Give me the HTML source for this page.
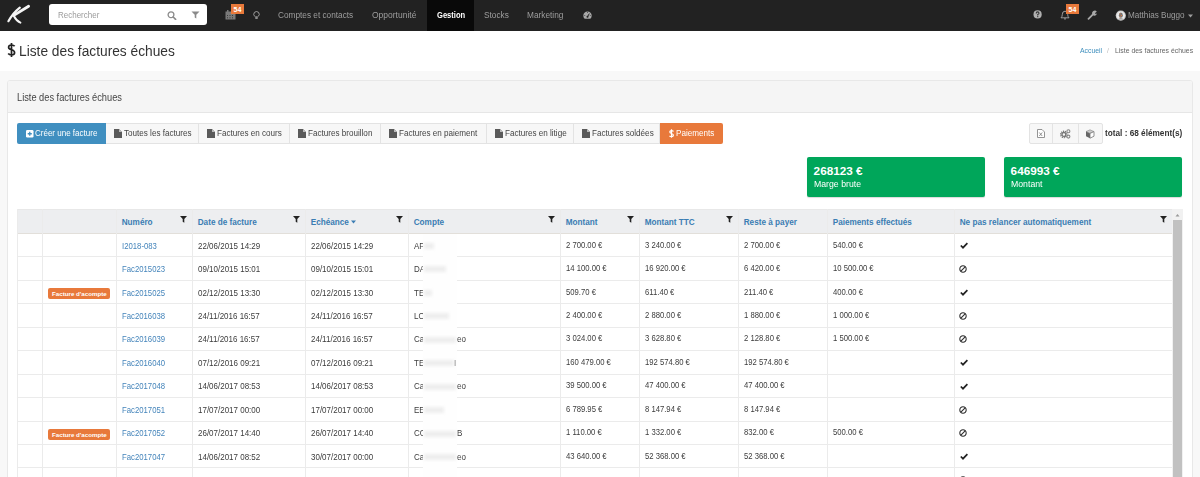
<!DOCTYPE html><html><head><meta charset="utf-8"><style>
*{box-sizing:border-box;margin:0;padding:0}
html,body{width:1200px;height:477px;overflow:hidden;background:#f8f8f8;font-family:"Liberation Sans",sans-serif;color:#333}
div,span{position:absolute;white-space:nowrap}
svg{position:absolute}
.hl{height:1px;background:#ebebeb}
.vl{width:1px;background:#ebebeb}
</style></head><body>
<div style="left:0;top:0;width:1200px;height:31px;background:#222"></div>
<svg style="left:0;top:0" width="40" height="30" viewBox="0 0 40 30"><path d="M8.4 21.2 Q13 13 19.8 7.6" stroke="#f4f4f4" stroke-width="2.2" fill="none" stroke-linecap="round"/><path d="M13.8 15.4 L28.6 6.2" stroke="#f4f4f4" stroke-width="2.8" fill="none" stroke-linecap="round"/><path d="M14 16.2 Q16.5 21 20.4 22.6" stroke="#f4f4f4" stroke-width="2" fill="none" stroke-linecap="round"/></svg>
<div style="left:49px;top:4px;width:158px;height:21px;background:#fff;border-radius:3px"></div>
<div style="left:57.50px;top:5px;height:20px;line-height:20px;font-size:8.60px;color:#9a9a9a;transform:scaleX(0.930);transform-origin:0 0;">Rechercher</div>
<svg style="left:167px;top:11px" width="10" height="9" viewBox="0 0 10 9"><circle cx="4" cy="3.8" r="2.9" stroke="#8a8a8a" stroke-width="1.3" fill="none"/><path d="M6.2 6 L8.6 8.4" stroke="#8a8a8a" stroke-width="1.6" stroke-linecap="round"/></svg>
<svg style="left:191px;top:11px" width="9" height="8" viewBox="0 0 9 8"><path d="M0.5 0.5 H8.5 L5.3 3.8 V7.5 L3.7 6.5 V3.8 Z" fill="#8a8a8a"/></svg>
<svg style="left:225px;top:10px" width="11" height="10" viewBox="0 0 11 10"><rect x="0.5" y="1.5" width="10" height="8" fill="#7a7a7a"/><rect x="2" y="0" width="1.5" height="2" fill="#7a7a7a"/><g fill="#3a3a3a"><rect x="2" y="5" width="1" height="1"/><rect x="4.5" y="5" width="1" height="1"/><rect x="7" y="5" width="1" height="1"/><rect x="2" y="7.3" width="1" height="1"/><rect x="4.5" y="7.3" width="1" height="1"/><rect x="7" y="7.3" width="1" height="1"/></g></svg>
<div style="left:231px;top:4px;width:13px;height:10px;background:#e8793b"></div>
<div style="left:233.50px;top:0px;height:20px;line-height:20px;font-size:7.00px;color:#fff;font-weight:bold;">54</div>
<svg style="left:253px;top:11px" width="7" height="8" viewBox="0 0 7 8"><path d="M3.5 0.5 A3 3 0 0 1 6.3 3.5 Q6 5 4.6 5.8 H2.4 Q1 5 0.7 3.5 A3 3 0 0 1 3.5 0.5Z" stroke="#aaa" stroke-width="0.9" fill="none"/><rect x="2.3" y="6.3" width="2.4" height="1.5" fill="#aaa"/></svg>
<div style="left:277.50px;top:5px;height:20px;line-height:20px;font-size:8.88px;color:#9d9d9d;transform:scaleX(0.930);transform-origin:0 0;">Comptes et contacts</div>
<div style="left:371.50px;top:5px;height:20px;line-height:20px;font-size:9.14px;color:#9d9d9d;transform:scaleX(0.930);transform-origin:0 0;">Opportunité</div>
<div style="left:427px;top:0;width:47px;height:31px;background:#090909"></div>
<div style="left:436.50px;top:6px;height:20px;line-height:20px;font-size:8.17px;color:#fff;font-weight:bold;transform:scaleX(0.930);transform-origin:0 0;">Gestion</div>
<div style="left:483.50px;top:5px;height:20px;line-height:20px;font-size:8.92px;color:#9d9d9d;transform:scaleX(0.930);transform-origin:0 0;">Stocks</div>
<div style="left:527.00px;top:5px;height:20px;line-height:20px;font-size:8.92px;color:#9d9d9d;transform:scaleX(0.930);transform-origin:0 0;">Marketing</div>
<svg style="left:583px;top:10.5px" width="9" height="9" viewBox="0 0 9 9"><path d="M1.67 7.8 A4.2 4.2 0 1 1 7.33 7.8 Z" fill="#a8a8a8"/><path d="M4.5 5.8 L6.3 2.6" stroke="#222" stroke-width="1"/><circle cx="4.5" cy="5.8" r="1" fill="#222"/><g fill="#222"><rect x="4.2" y="1" width="0.6" height="1"/><rect x="1.2" y="4.2" width="1" height="0.6"/><rect x="6.8" y="4.2" width="1" height="0.6"/></g></svg>
<svg style="left:1033px;top:10px" width="10" height="9" viewBox="0 0 10 9"><circle cx="4.6" cy="4.4" r="4.1" fill="#b0b0b0"/><path d="M3.2 3.4 Q3.2 1.9 4.6 1.9 Q6 1.9 6 3.2 Q6 4 4.7 4.6 V5.4" stroke="#333" stroke-width="1.1" fill="none"/><rect x="4.1" y="6.1" width="1.2" height="1.1" fill="#333"/></svg>
<svg style="left:1060px;top:10px" width="10" height="10" viewBox="0 0 10 10"><path d="M1 7.8 Q2.3 6.6 2.3 4.5 Q2.3 1.2 5 1.2 Q7.7 1.2 7.7 4.5 Q7.7 6.6 9 7.8 Z" stroke="#a8a8a8" stroke-width="0.9" fill="none"/><path d="M4 8.6 Q5 9.8 6 8.6" stroke="#a8a8a8" stroke-width="0.9" fill="none"/></svg>
<div style="left:1066px;top:4px;width:13px;height:10px;background:#e8793b"></div>
<div style="left:1068.50px;top:0px;height:20px;line-height:20px;font-size:7.00px;color:#fff;font-weight:bold;">54</div>
<svg style="left:1087px;top:10px" width="11" height="10" viewBox="0 0 11 10"><path d="M1.5 8.8 L6.2 4.2" stroke="#a8a8a8" stroke-width="1.8" stroke-linecap="round"/><path d="M5.5 4.5 A2.6 2.6 0 0 1 9.8 1.6 L8.2 3 L8.4 4 L9.5 4.2 L10 2.6 A2.6 2.6 0 0 1 6.5 5.5Z" fill="#a8a8a8"/></svg>
<svg style="left:1115px;top:10px" width="12" height="12" viewBox="0 0 12 12"><circle cx="5.8" cy="5.6" r="5.1" fill="#c9c9c9"/><circle cx="5.8" cy="5.6" r="4.2" fill="#eaeaea"/><ellipse cx="5.9" cy="5.2" rx="2" ry="2.6" fill="#777"/><path d="M2.5 9.5 Q5.8 6.5 9.1 9.5" fill="#999"/><g fill="#e8793b"><rect x="4.6" y="3.4" width="1" height="1"/><rect x="6" y="5" width="1" height="1"/><rect x="4.6" y="6.4" width="1" height="1"/></g></svg>
<div style="left:1128.00px;top:5px;height:20px;line-height:20px;font-size:8.77px;color:#9d9d9d;transform:scaleX(0.930);transform-origin:0 0;">Matthias Buggo</div>
<svg style="left:1188px;top:14px" width="5" height="4" viewBox="0 0 5 4"><path d="M0 0.5 H5 L2.5 3.5Z" fill="#9d9d9d"/></svg>
<div style="left:0;top:31px;width:1200px;height:40px;background:#fff"></div>
<svg style="left:7px;top:42px" width="9" height="16" viewBox="0 0 9 16"><path d="M7.6 4.3 Q6.8 3 4.5 3 Q1.6 3 1.6 5.2 Q1.6 7 4.5 7.8 Q7.6 8.6 7.6 10.8 Q7.6 13 4.5 13 Q2.2 13 1.2 11.6 M4.5 1 V15" stroke="#222" stroke-width="1.7" fill="none"/></svg>
<div style="left:19.30px;top:41px;height:20px;line-height:20px;font-size:14.48px;color:#333;transform:scaleX(0.950);transform-origin:0 0;">Liste des factures échues</div>
<div style="left:1080.00px;top:41px;height:20px;line-height:20px;font-size:7.37px;color:#3c8dbc;transform:scaleX(0.930);transform-origin:0 0;">Accueil</div>
<div style="left:1107.00px;top:41px;height:20px;line-height:20px;font-size:7.37px;color:#bbb;transform:scaleX(0.930);transform-origin:0 0;">/</div>
<div style="left:1115.00px;top:41px;height:20px;line-height:20px;font-size:7.42px;color:#666;transform:scaleX(0.930);transform-origin:0 0;">Liste des factures échues</div>
<div style="left:7px;top:80px;width:1186px;height:400px;background:#fff;border:1px solid #e8e8e8;border-radius:3px"></div>
<div style="left:8px;top:81px;width:1184px;height:32px;background:#f5f5f5;border-bottom:1px solid #e6e6e6;border-radius:2px 2px 0 0"></div>
<div style="left:17.00px;top:88px;height:20px;line-height:20px;font-size:10.29px;color:#444;transform:scaleX(0.900);transform-origin:0 0;">Liste des factures échues</div>
<div style="left:17px;top:123px;width:89px;height:21px;background:#408fc0;border-radius:2px 0 0 2px"></div>
<svg style="left:26px;top:130px" width="8" height="8" viewBox="0 0 8 8"><rect x="0" y="0" width="7.5" height="7.5" rx="1.2" fill="#fff"/><path d="M3.75 1.7 V5.8 M1.7 3.75 H5.8" stroke="#408fc0" stroke-width="1.3"/></svg>
<div style="left:35.30px;top:123px;height:20px;line-height:20px;font-size:8.92px;color:#fff;transform:scaleX(0.900);transform-origin:0 0;">Créer une facture</div>
<div style="left:106px;top:123px;width:93px;height:21px;background:#f7f7f7;border:1px solid #e3e3e3;border-left:none"></div>
<svg style="left:114px;top:129px" width="8" height="9" viewBox="0 0 8 9"><path d="M0 0 H5 L8 3 V9 H0Z" fill="#5a5a5a"/><path d="M5 0 V3 H8" fill="#bbb"/></svg>
<div style="left:124.00px;top:123px;height:20px;line-height:20px;font-size:9.00px;color:#444;transform:scaleX(0.900);transform-origin:0 0;">Toutes les factures</div>
<div style="left:199px;top:123px;width:91px;height:21px;background:#f7f7f7;border:1px solid #e3e3e3;border-left:none"></div>
<svg style="left:207px;top:129px" width="8" height="9" viewBox="0 0 8 9"><path d="M0 0 H5 L8 3 V9 H0Z" fill="#5a5a5a"/><path d="M5 0 V3 H8" fill="#bbb"/></svg>
<div style="left:217.00px;top:123px;height:20px;line-height:20px;font-size:9.00px;color:#444;transform:scaleX(0.900);transform-origin:0 0;">Factures en cours</div>
<div style="left:290px;top:123px;width:91px;height:21px;background:#f7f7f7;border:1px solid #e3e3e3;border-left:none"></div>
<svg style="left:298px;top:129px" width="8" height="9" viewBox="0 0 8 9"><path d="M0 0 H5 L8 3 V9 H0Z" fill="#5a5a5a"/><path d="M5 0 V3 H8" fill="#bbb"/></svg>
<div style="left:308.00px;top:123px;height:20px;line-height:20px;font-size:9.00px;color:#444;transform:scaleX(0.900);transform-origin:0 0;">Factures brouillon</div>
<div style="left:381px;top:123px;width:106px;height:21px;background:#f7f7f7;border:1px solid #e3e3e3;border-left:none"></div>
<svg style="left:389px;top:129px" width="8" height="9" viewBox="0 0 8 9"><path d="M0 0 H5 L8 3 V9 H0Z" fill="#5a5a5a"/><path d="M5 0 V3 H8" fill="#bbb"/></svg>
<div style="left:399.00px;top:123px;height:20px;line-height:20px;font-size:9.00px;color:#444;transform:scaleX(0.900);transform-origin:0 0;">Factures en paiement</div>
<div style="left:487px;top:123px;width:87px;height:21px;background:#f7f7f7;border:1px solid #e3e3e3;border-left:none"></div>
<svg style="left:495px;top:129px" width="8" height="9" viewBox="0 0 8 9"><path d="M0 0 H5 L8 3 V9 H0Z" fill="#5a5a5a"/><path d="M5 0 V3 H8" fill="#bbb"/></svg>
<div style="left:505.00px;top:123px;height:20px;line-height:20px;font-size:9.00px;color:#444;transform:scaleX(0.900);transform-origin:0 0;">Factures en litige</div>
<div style="left:574px;top:123px;width:86px;height:21px;background:#f7f7f7;border:1px solid #e3e3e3;border-left:none"></div>
<svg style="left:582px;top:129px" width="8" height="9" viewBox="0 0 8 9"><path d="M0 0 H5 L8 3 V9 H0Z" fill="#5a5a5a"/><path d="M5 0 V3 H8" fill="#bbb"/></svg>
<div style="left:592.00px;top:123px;height:20px;line-height:20px;font-size:9.00px;color:#444;transform:scaleX(0.900);transform-origin:0 0;">Factures soldées</div>
<div style="left:660px;top:123px;width:63px;height:21px;background:#e8793b;border-radius:0 2px 2px 0"></div>
<svg style="left:669px;top:129px" width="5" height="9" viewBox="0 0 5 9"><path d="M4.5 2.6 Q4 1.6 2.5 1.6 Q0.8 1.6 0.8 3 Q0.8 4 2.5 4.5 Q4.4 5 4.4 6.3 Q4.4 7.6 2.5 7.6 Q1.1 7.6 0.5 6.8 M2.5 0.2 V8.8" stroke="#fff" stroke-width="1.2" fill="none"/></svg>
<div style="left:676.00px;top:123px;height:20px;line-height:20px;font-size:8.99px;color:#fff;transform:scaleX(0.900);transform-origin:0 0;">Paiements</div>
<div style="left:1029px;top:123px;width:74px;height:21px;background:#f7f7f7;border:1px solid #e3e3e3;border-radius:2px"></div>
<div style="left:1052px;top:123px;width:1px;height:21px;background:#e3e3e3"></div>
<div style="left:1078px;top:123px;width:1px;height:21px;background:#e3e3e3"></div>
<svg style="left:1037px;top:129px" width="8" height="9" viewBox="0 0 8 9"><path d="M0.5 0.5 H5 L7.5 3 V8.5 H0.5Z" stroke="#888" stroke-width="0.9" fill="#fff"/><path d="M2.3 3.5 L5.2 7 M5.2 3.5 L2.3 7" stroke="#888" stroke-width="0.9"/></svg>
<svg style="left:1060px;top:129px" width="11" height="10" viewBox="0 0 11 10"><circle cx="3.9" cy="5.4" r="3.1" stroke="#777" stroke-width="1.5" stroke-dasharray="1.1 0.8" fill="none"/><circle cx="3.9" cy="5.4" r="1.9" stroke="#777" stroke-width="1.3" fill="none"/><circle cx="8.4" cy="2.2" r="1.5" stroke="#888" stroke-width="1.1" fill="none"/><circle cx="8.4" cy="7.6" r="1.5" stroke="#888" stroke-width="1.1" fill="none"/></svg>
<svg style="left:1085px;top:129px" width="10" height="10" viewBox="0 0 10 10"><path d="M1 2.6 L5 0.8 L9 2.6 L5 4.4 Z" fill="#ccc" stroke="#888" stroke-width="0.6"/><path d="M1 2.6 V7.2 L5 9.2 V4.4 Z" fill="#666"/><path d="M9 2.6 V7.2 L5 9.2 V4.4 Z" fill="#fff" stroke="#777" stroke-width="0.8"/></svg>
<div style="left:1105.00px;top:123px;height:20px;line-height:20px;font-size:8.85px;color:#333;font-weight:bold;transform:scaleX(0.930);transform-origin:0 0;">total : 68 élément(s)</div>
<div style="left:807px;top:157px;width:178px;height:40px;background:#00a65a;border-radius:2px;box-shadow:0 1px 1px rgba(0,0,0,.15)"></div>
<div style="left:813.60px;top:161px;height:20px;line-height:20px;font-size:11.75px;color:#fff;font-weight:bold;">268123 €</div>
<div style="left:813.60px;top:174px;height:20px;line-height:20px;font-size:9.38px;color:#fff;transform:scaleX(0.930);transform-origin:0 0;">Marge brute</div>
<div style="left:1004px;top:157px;width:178px;height:40px;background:#00a65a;border-radius:2px;box-shadow:0 1px 1px rgba(0,0,0,.15)"></div>
<div style="left:1010.60px;top:161px;height:20px;line-height:20px;font-size:11.75px;color:#fff;font-weight:bold;">646993 €</div>
<div style="left:1010.60px;top:174px;height:20px;line-height:20px;font-size:9.38px;color:#fff;transform:scaleX(0.930);transform-origin:0 0;">Montant</div>
<div style="left:17px;top:209px;width:1155px;height:24px;background:#edeef0"></div>
<div class="hl" style="left:17px;top:209px;width:1155px;background:#e8e8e8"></div>
<div class="hl" style="left:17px;top:233px;width:1155px;background:#e2dfda"></div>
<div class="hl" style="left:17px;top:256px;width:1155px"></div>
<div class="hl" style="left:17px;top:280px;width:1155px"></div>
<div class="hl" style="left:17px;top:303px;width:1155px"></div>
<div class="hl" style="left:17px;top:327px;width:1155px"></div>
<div class="hl" style="left:17px;top:350px;width:1155px"></div>
<div class="hl" style="left:17px;top:374px;width:1155px"></div>
<div class="hl" style="left:17px;top:397px;width:1155px"></div>
<div class="hl" style="left:17px;top:421px;width:1155px"></div>
<div class="hl" style="left:17px;top:444px;width:1155px"></div>
<div class="hl" style="left:17px;top:467px;width:1155px"></div>
<div class="hl" style="left:17px;top:490px;width:1155px"></div>
<div class="vl" style="left:17px;top:209px;height:268px"></div>
<div class="vl" style="left:42px;top:209px;height:268px"></div>
<div class="vl" style="left:116px;top:209px;height:268px"></div>
<div class="vl" style="left:192px;top:209px;height:268px"></div>
<div class="vl" style="left:305px;top:209px;height:268px"></div>
<div class="vl" style="left:408px;top:209px;height:268px"></div>
<div class="vl" style="left:560px;top:209px;height:268px"></div>
<div class="vl" style="left:639px;top:209px;height:268px"></div>
<div class="vl" style="left:738px;top:209px;height:268px"></div>
<div class="vl" style="left:827px;top:209px;height:268px"></div>
<div class="vl" style="left:954px;top:209px;height:268px"></div>
<div style="left:121.70px;top:213px;height:20px;line-height:20px;font-size:8.20px;color:#3b7db3;font-weight:bold;">Numéro</div>
<div style="left:197.70px;top:213px;height:20px;line-height:20px;font-size:8.20px;color:#3b7db3;font-weight:bold;">Date de facture</div>
<div style="left:310.70px;top:213px;height:20px;line-height:20px;font-size:8.20px;color:#3b7db3;font-weight:bold;">Echéance</div>
<div style="left:413.70px;top:213px;height:20px;line-height:20px;font-size:8.20px;color:#3b7db3;font-weight:bold;">Compte</div>
<div style="left:565.70px;top:213px;height:20px;line-height:20px;font-size:8.20px;color:#3b7db3;font-weight:bold;">Montant</div>
<div style="left:644.70px;top:213px;height:20px;line-height:20px;font-size:8.20px;color:#3b7db3;font-weight:bold;">Montant TTC</div>
<div style="left:743.70px;top:213px;height:20px;line-height:20px;font-size:8.20px;color:#3b7db3;font-weight:bold;">Reste à payer</div>
<div style="left:832.70px;top:213px;height:20px;line-height:20px;font-size:8.20px;color:#3b7db3;font-weight:bold;">Paiements effectués</div>
<div style="left:959.70px;top:213px;height:20px;line-height:20px;font-size:8.20px;color:#3b7db3;font-weight:bold;">Ne pas relancer automatiquement</div>
<svg style="left:180px;top:216px" width="7" height="7" viewBox="0 0 7 7"><path d="M0 0 H7 L4.3 3 V6.8 L2.7 5.8 V3 Z" fill="#222"/></svg>
<svg style="left:293px;top:216px" width="7" height="7" viewBox="0 0 7 7"><path d="M0 0 H7 L4.3 3 V6.8 L2.7 5.8 V3 Z" fill="#222"/></svg>
<svg style="left:396px;top:216px" width="7" height="7" viewBox="0 0 7 7"><path d="M0 0 H7 L4.3 3 V6.8 L2.7 5.8 V3 Z" fill="#222"/></svg>
<svg style="left:548px;top:216px" width="7" height="7" viewBox="0 0 7 7"><path d="M0 0 H7 L4.3 3 V6.8 L2.7 5.8 V3 Z" fill="#222"/></svg>
<svg style="left:627px;top:216px" width="7" height="7" viewBox="0 0 7 7"><path d="M0 0 H7 L4.3 3 V6.8 L2.7 5.8 V3 Z" fill="#222"/></svg>
<svg style="left:726px;top:216px" width="7" height="7" viewBox="0 0 7 7"><path d="M0 0 H7 L4.3 3 V6.8 L2.7 5.8 V3 Z" fill="#222"/></svg>
<svg style="left:1160px;top:216px" width="7" height="7" viewBox="0 0 7 7"><path d="M0 0 H7 L4.3 3 V6.8 L2.7 5.8 V3 Z" fill="#222"/></svg>
<svg style="left:351px;top:220px" width="5" height="4" viewBox="0 0 5 4"><path d="M0 0.5 H5 L2.5 3.5Z" fill="#3b7db3"/></svg>
<div style="left:122.00px;top:236px;height:20px;line-height:20px;font-size:8.33px;color:#4585bb;transform:scaleX(0.930);transform-origin:0 0;">I2018-083</div>
<div style="left:198.00px;top:236px;height:20px;line-height:20px;font-size:8.60px;color:#3c3c3c;transform:scaleX(0.930);transform-origin:0 0;">22/06/2015 14:29</div>
<div style="left:311.00px;top:236px;height:20px;line-height:20px;font-size:8.60px;color:#3c3c3c;transform:scaleX(0.930);transform-origin:0 0;">22/06/2015 14:29</div>
<div style="left:414.00px;top:236px;height:20px;line-height:20px;font-size:8.60px;color:#3c3c3c;transform:scaleX(0.930);transform-origin:0 0;">AP</div>
<div style="left:565.50px;top:236px;height:20px;line-height:20px;font-size:8.28px;color:#3c3c3c;transform:scaleX(0.930);transform-origin:0 0;">2 700.00 €</div>
<div style="left:645.00px;top:236px;height:20px;line-height:20px;font-size:8.28px;color:#3c3c3c;transform:scaleX(0.930);transform-origin:0 0;">3 240.00 €</div>
<div style="left:743.50px;top:236px;height:20px;line-height:20px;font-size:8.28px;color:#3c3c3c;transform:scaleX(0.930);transform-origin:0 0;">2 700.00 €</div>
<div style="left:832.50px;top:236px;height:20px;line-height:20px;font-size:8.28px;color:#3c3c3c;transform:scaleX(0.930);transform-origin:0 0;">540.00 €</div>
<svg style="left:960px;top:242px" width="8" height="7" viewBox="0 0 8 7"><path d="M0.8 3.5 L3 5.7 L7.4 1.2" stroke="#222" stroke-width="1.7" fill="none"/></svg>
<div style="left:122.00px;top:259px;height:20px;line-height:20px;font-size:8.33px;color:#4585bb;transform:scaleX(0.930);transform-origin:0 0;">Fac2015023</div>
<div style="left:198.00px;top:259px;height:20px;line-height:20px;font-size:8.60px;color:#3c3c3c;transform:scaleX(0.930);transform-origin:0 0;">09/10/2015 15:01</div>
<div style="left:311.00px;top:259px;height:20px;line-height:20px;font-size:8.60px;color:#3c3c3c;transform:scaleX(0.930);transform-origin:0 0;">09/10/2015 15:01</div>
<div style="left:414.00px;top:259px;height:20px;line-height:20px;font-size:8.60px;color:#3c3c3c;transform:scaleX(0.930);transform-origin:0 0;">DA</div>
<div style="left:565.50px;top:259px;height:20px;line-height:20px;font-size:8.28px;color:#3c3c3c;transform:scaleX(0.930);transform-origin:0 0;">14 100.00 €</div>
<div style="left:645.00px;top:259px;height:20px;line-height:20px;font-size:8.28px;color:#3c3c3c;transform:scaleX(0.930);transform-origin:0 0;">16 920.00 €</div>
<div style="left:743.50px;top:259px;height:20px;line-height:20px;font-size:8.28px;color:#3c3c3c;transform:scaleX(0.930);transform-origin:0 0;">6 420.00 €</div>
<div style="left:832.50px;top:259px;height:20px;line-height:20px;font-size:8.28px;color:#3c3c3c;transform:scaleX(0.930);transform-origin:0 0;">10 500.00 €</div>
<svg style="left:959px;top:265px" width="8" height="8" viewBox="0 0 8 8"><circle cx="4" cy="4" r="3.2" stroke="#2a2a2a" stroke-width="1.05" fill="none"/><path d="M1.9 6.1 L6.1 1.9" stroke="#2a2a2a" stroke-width="1.05"/></svg>
<div style="left:48px;top:288px;width:62px;height:11px;background:#e8793b;border-radius:2px"></div>
<div style="left:52.00px;top:284px;height:20px;line-height:20px;font-size:6.20px;color:#fff;font-weight:bold;">Facture d'acompte</div>
<div style="left:122.00px;top:283px;height:20px;line-height:20px;font-size:8.33px;color:#4585bb;transform:scaleX(0.930);transform-origin:0 0;">Fac2015025</div>
<div style="left:198.00px;top:283px;height:20px;line-height:20px;font-size:8.60px;color:#3c3c3c;transform:scaleX(0.930);transform-origin:0 0;">02/12/2015 13:30</div>
<div style="left:311.00px;top:283px;height:20px;line-height:20px;font-size:8.60px;color:#3c3c3c;transform:scaleX(0.930);transform-origin:0 0;">02/12/2015 13:30</div>
<div style="left:414.00px;top:283px;height:20px;line-height:20px;font-size:8.60px;color:#3c3c3c;transform:scaleX(0.930);transform-origin:0 0;">TE</div>
<div style="left:565.50px;top:283px;height:20px;line-height:20px;font-size:8.28px;color:#3c3c3c;transform:scaleX(0.930);transform-origin:0 0;">509.70 €</div>
<div style="left:645.00px;top:283px;height:20px;line-height:20px;font-size:8.28px;color:#3c3c3c;transform:scaleX(0.930);transform-origin:0 0;">611.40 €</div>
<div style="left:743.50px;top:283px;height:20px;line-height:20px;font-size:8.28px;color:#3c3c3c;transform:scaleX(0.930);transform-origin:0 0;">211.40 €</div>
<div style="left:832.50px;top:283px;height:20px;line-height:20px;font-size:8.28px;color:#3c3c3c;transform:scaleX(0.930);transform-origin:0 0;">400.00 €</div>
<svg style="left:960px;top:289px" width="8" height="7" viewBox="0 0 8 7"><path d="M0.8 3.5 L3 5.7 L7.4 1.2" stroke="#222" stroke-width="1.7" fill="none"/></svg>
<div style="left:122.00px;top:306px;height:20px;line-height:20px;font-size:8.33px;color:#4585bb;transform:scaleX(0.930);transform-origin:0 0;">Fac2016038</div>
<div style="left:198.00px;top:306px;height:20px;line-height:20px;font-size:8.60px;color:#3c3c3c;transform:scaleX(0.930);transform-origin:0 0;">24/11/2016 16:57</div>
<div style="left:311.00px;top:306px;height:20px;line-height:20px;font-size:8.60px;color:#3c3c3c;transform:scaleX(0.930);transform-origin:0 0;">24/11/2016 16:57</div>
<div style="left:414.00px;top:306px;height:20px;line-height:20px;font-size:8.60px;color:#3c3c3c;transform:scaleX(0.930);transform-origin:0 0;">LO</div>
<div style="left:565.50px;top:306px;height:20px;line-height:20px;font-size:8.28px;color:#3c3c3c;transform:scaleX(0.930);transform-origin:0 0;">2 400.00 €</div>
<div style="left:645.00px;top:306px;height:20px;line-height:20px;font-size:8.28px;color:#3c3c3c;transform:scaleX(0.930);transform-origin:0 0;">2 880.00 €</div>
<div style="left:743.50px;top:306px;height:20px;line-height:20px;font-size:8.28px;color:#3c3c3c;transform:scaleX(0.930);transform-origin:0 0;">1 880.00 €</div>
<div style="left:832.50px;top:306px;height:20px;line-height:20px;font-size:8.28px;color:#3c3c3c;transform:scaleX(0.930);transform-origin:0 0;">1 000.00 €</div>
<svg style="left:959px;top:312px" width="8" height="8" viewBox="0 0 8 8"><circle cx="4" cy="4" r="3.2" stroke="#2a2a2a" stroke-width="1.05" fill="none"/><path d="M1.9 6.1 L6.1 1.9" stroke="#2a2a2a" stroke-width="1.05"/></svg>
<div style="left:122.00px;top:329px;height:20px;line-height:20px;font-size:8.33px;color:#4585bb;transform:scaleX(0.930);transform-origin:0 0;">Fac2016039</div>
<div style="left:198.00px;top:329px;height:20px;line-height:20px;font-size:8.60px;color:#3c3c3c;transform:scaleX(0.930);transform-origin:0 0;">24/11/2016 16:57</div>
<div style="left:311.00px;top:329px;height:20px;line-height:20px;font-size:8.60px;color:#3c3c3c;transform:scaleX(0.930);transform-origin:0 0;">24/11/2016 16:57</div>
<div style="left:414.00px;top:329px;height:20px;line-height:20px;font-size:8.60px;color:#3c3c3c;transform:scaleX(0.930);transform-origin:0 0;">Ca</div>
<div style="left:457.00px;top:329px;height:20px;line-height:20px;font-size:8.60px;color:#3c3c3c;transform:scaleX(0.930);transform-origin:0 0;">eo</div>
<div style="left:565.50px;top:329px;height:20px;line-height:20px;font-size:8.28px;color:#3c3c3c;transform:scaleX(0.930);transform-origin:0 0;">3 024.00 €</div>
<div style="left:645.00px;top:329px;height:20px;line-height:20px;font-size:8.28px;color:#3c3c3c;transform:scaleX(0.930);transform-origin:0 0;">3 628.80 €</div>
<div style="left:743.50px;top:329px;height:20px;line-height:20px;font-size:8.28px;color:#3c3c3c;transform:scaleX(0.930);transform-origin:0 0;">2 128.80 €</div>
<div style="left:832.50px;top:329px;height:20px;line-height:20px;font-size:8.28px;color:#3c3c3c;transform:scaleX(0.930);transform-origin:0 0;">1 500.00 €</div>
<svg style="left:959px;top:335px" width="8" height="8" viewBox="0 0 8 8"><circle cx="4" cy="4" r="3.2" stroke="#2a2a2a" stroke-width="1.05" fill="none"/><path d="M1.9 6.1 L6.1 1.9" stroke="#2a2a2a" stroke-width="1.05"/></svg>
<div style="left:122.00px;top:353px;height:20px;line-height:20px;font-size:8.33px;color:#4585bb;transform:scaleX(0.930);transform-origin:0 0;">Fac2016040</div>
<div style="left:198.00px;top:353px;height:20px;line-height:20px;font-size:8.60px;color:#3c3c3c;transform:scaleX(0.930);transform-origin:0 0;">07/12/2016 09:21</div>
<div style="left:311.00px;top:353px;height:20px;line-height:20px;font-size:8.60px;color:#3c3c3c;transform:scaleX(0.930);transform-origin:0 0;">07/12/2016 09:21</div>
<div style="left:414.00px;top:353px;height:20px;line-height:20px;font-size:8.60px;color:#3c3c3c;transform:scaleX(0.930);transform-origin:0 0;">TE</div>
<div style="left:565.50px;top:353px;height:20px;line-height:20px;font-size:8.28px;color:#3c3c3c;transform:scaleX(0.930);transform-origin:0 0;">160 479.00 €</div>
<div style="left:645.00px;top:353px;height:20px;line-height:20px;font-size:8.28px;color:#3c3c3c;transform:scaleX(0.930);transform-origin:0 0;">192 574.80 €</div>
<div style="left:743.50px;top:353px;height:20px;line-height:20px;font-size:8.28px;color:#3c3c3c;transform:scaleX(0.930);transform-origin:0 0;">192 574.80 €</div>
<svg style="left:960px;top:359px" width="8" height="7" viewBox="0 0 8 7"><path d="M0.8 3.5 L3 5.7 L7.4 1.2" stroke="#222" stroke-width="1.7" fill="none"/></svg>
<div style="left:122.00px;top:376px;height:20px;line-height:20px;font-size:8.33px;color:#4585bb;transform:scaleX(0.930);transform-origin:0 0;">Fac2017048</div>
<div style="left:198.00px;top:376px;height:20px;line-height:20px;font-size:8.60px;color:#3c3c3c;transform:scaleX(0.930);transform-origin:0 0;">14/06/2017 08:53</div>
<div style="left:311.00px;top:376px;height:20px;line-height:20px;font-size:8.60px;color:#3c3c3c;transform:scaleX(0.930);transform-origin:0 0;">14/06/2017 08:53</div>
<div style="left:414.00px;top:376px;height:20px;line-height:20px;font-size:8.60px;color:#3c3c3c;transform:scaleX(0.930);transform-origin:0 0;">Ca</div>
<div style="left:457.00px;top:376px;height:20px;line-height:20px;font-size:8.60px;color:#3c3c3c;transform:scaleX(0.930);transform-origin:0 0;">eo</div>
<div style="left:565.50px;top:376px;height:20px;line-height:20px;font-size:8.28px;color:#3c3c3c;transform:scaleX(0.930);transform-origin:0 0;">39 500.00 €</div>
<div style="left:645.00px;top:376px;height:20px;line-height:20px;font-size:8.28px;color:#3c3c3c;transform:scaleX(0.930);transform-origin:0 0;">47 400.00 €</div>
<div style="left:743.50px;top:376px;height:20px;line-height:20px;font-size:8.28px;color:#3c3c3c;transform:scaleX(0.930);transform-origin:0 0;">47 400.00 €</div>
<svg style="left:960px;top:383px" width="8" height="7" viewBox="0 0 8 7"><path d="M0.8 3.5 L3 5.7 L7.4 1.2" stroke="#222" stroke-width="1.7" fill="none"/></svg>
<div style="left:122.00px;top:400px;height:20px;line-height:20px;font-size:8.33px;color:#4585bb;transform:scaleX(0.930);transform-origin:0 0;">Fac2017051</div>
<div style="left:198.00px;top:400px;height:20px;line-height:20px;font-size:8.60px;color:#3c3c3c;transform:scaleX(0.930);transform-origin:0 0;">17/07/2017 00:00</div>
<div style="left:311.00px;top:400px;height:20px;line-height:20px;font-size:8.60px;color:#3c3c3c;transform:scaleX(0.930);transform-origin:0 0;">17/07/2017 00:00</div>
<div style="left:414.00px;top:400px;height:20px;line-height:20px;font-size:8.60px;color:#3c3c3c;transform:scaleX(0.930);transform-origin:0 0;">EE</div>
<div style="left:565.50px;top:400px;height:20px;line-height:20px;font-size:8.28px;color:#3c3c3c;transform:scaleX(0.930);transform-origin:0 0;">6 789.95 €</div>
<div style="left:645.00px;top:400px;height:20px;line-height:20px;font-size:8.28px;color:#3c3c3c;transform:scaleX(0.930);transform-origin:0 0;">8 147.94 €</div>
<div style="left:743.50px;top:400px;height:20px;line-height:20px;font-size:8.28px;color:#3c3c3c;transform:scaleX(0.930);transform-origin:0 0;">8 147.94 €</div>
<svg style="left:959px;top:406px" width="8" height="8" viewBox="0 0 8 8"><circle cx="4" cy="4" r="3.2" stroke="#2a2a2a" stroke-width="1.05" fill="none"/><path d="M1.9 6.1 L6.1 1.9" stroke="#2a2a2a" stroke-width="1.05"/></svg>
<div style="left:48px;top:429px;width:62px;height:11px;background:#e8793b;border-radius:2px"></div>
<div style="left:52.00px;top:425px;height:20px;line-height:20px;font-size:6.20px;color:#fff;font-weight:bold;">Facture d'acompte</div>
<div style="left:122.00px;top:423px;height:20px;line-height:20px;font-size:8.33px;color:#4585bb;transform:scaleX(0.930);transform-origin:0 0;">Fac2017052</div>
<div style="left:198.00px;top:423px;height:20px;line-height:20px;font-size:8.60px;color:#3c3c3c;transform:scaleX(0.930);transform-origin:0 0;">26/07/2017 14:40</div>
<div style="left:311.00px;top:423px;height:20px;line-height:20px;font-size:8.60px;color:#3c3c3c;transform:scaleX(0.930);transform-origin:0 0;">26/07/2017 14:40</div>
<div style="left:414.00px;top:423px;height:20px;line-height:20px;font-size:8.60px;color:#3c3c3c;transform:scaleX(0.930);transform-origin:0 0;">CO</div>
<div style="left:457.00px;top:423px;height:20px;line-height:20px;font-size:8.60px;color:#3c3c3c;transform:scaleX(0.930);transform-origin:0 0;">B</div>
<div style="left:565.50px;top:423px;height:20px;line-height:20px;font-size:8.28px;color:#3c3c3c;transform:scaleX(0.930);transform-origin:0 0;">1 110.00 €</div>
<div style="left:645.00px;top:423px;height:20px;line-height:20px;font-size:8.28px;color:#3c3c3c;transform:scaleX(0.930);transform-origin:0 0;">1 332.00 €</div>
<div style="left:743.50px;top:423px;height:20px;line-height:20px;font-size:8.28px;color:#3c3c3c;transform:scaleX(0.930);transform-origin:0 0;">832.00 €</div>
<div style="left:832.50px;top:423px;height:20px;line-height:20px;font-size:8.28px;color:#3c3c3c;transform:scaleX(0.930);transform-origin:0 0;">500.00 €</div>
<svg style="left:959px;top:429px" width="8" height="8" viewBox="0 0 8 8"><circle cx="4" cy="4" r="3.2" stroke="#2a2a2a" stroke-width="1.05" fill="none"/><path d="M1.9 6.1 L6.1 1.9" stroke="#2a2a2a" stroke-width="1.05"/></svg>
<div style="left:122.00px;top:447px;height:20px;line-height:20px;font-size:8.33px;color:#4585bb;transform:scaleX(0.930);transform-origin:0 0;">Fac2017047</div>
<div style="left:198.00px;top:447px;height:20px;line-height:20px;font-size:8.60px;color:#3c3c3c;transform:scaleX(0.930);transform-origin:0 0;">14/06/2017 08:52</div>
<div style="left:311.00px;top:447px;height:20px;line-height:20px;font-size:8.60px;color:#3c3c3c;transform:scaleX(0.930);transform-origin:0 0;">30/07/2017 00:00</div>
<div style="left:414.00px;top:447px;height:20px;line-height:20px;font-size:8.60px;color:#3c3c3c;transform:scaleX(0.930);transform-origin:0 0;">Ca</div>
<div style="left:457.00px;top:447px;height:20px;line-height:20px;font-size:8.60px;color:#3c3c3c;transform:scaleX(0.930);transform-origin:0 0;">eo</div>
<div style="left:565.50px;top:447px;height:20px;line-height:20px;font-size:8.28px;color:#3c3c3c;transform:scaleX(0.930);transform-origin:0 0;">43 640.00 €</div>
<div style="left:645.00px;top:447px;height:20px;line-height:20px;font-size:8.28px;color:#3c3c3c;transform:scaleX(0.930);transform-origin:0 0;">52 368.00 €</div>
<div style="left:743.50px;top:447px;height:20px;line-height:20px;font-size:8.28px;color:#3c3c3c;transform:scaleX(0.930);transform-origin:0 0;">52 368.00 €</div>
<svg style="left:960px;top:453px" width="8" height="7" viewBox="0 0 8 7"><path d="M0.8 3.5 L3 5.7 L7.4 1.2" stroke="#222" stroke-width="1.7" fill="none"/></svg>
<svg style="left:959px;top:476px" width="8" height="8" viewBox="0 0 8 8"><circle cx="4" cy="4" r="3.2" stroke="#2a2a2a" stroke-width="1.05" fill="none"/><path d="M1.9 6.1 L6.1 1.9" stroke="#2a2a2a" stroke-width="1.05"/></svg>
<div style="left:423px;top:234px;width:34px;height:243px;background:#fefefe"></div>
<div style="left:424px;top:243px;width:10px;height:6px;background:#eeeeee;filter:blur(1.5px)"></div>
<div style="left:424px;top:266px;width:22px;height:6px;background:#eeeeee;filter:blur(1.5px)"></div>
<div style="left:424px;top:290px;width:8px;height:6px;background:#eeeeee;filter:blur(1.5px)"></div>
<div style="left:424px;top:313px;width:25px;height:6px;background:#eeeeee;filter:blur(1.5px)"></div>
<div style="left:424px;top:337px;width:32px;height:6px;background:#eeeeee;filter:blur(1.5px)"></div>
<div style="left:424px;top:360px;width:30px;height:6px;background:#eeeeee;filter:blur(1.5px)"></div>
<div style="left:424px;top:384px;width:32px;height:6px;background:#eeeeee;filter:blur(1.5px)"></div>
<div style="left:424px;top:407px;width:20px;height:6px;background:#eeeeee;filter:blur(1.5px)"></div>
<div style="left:424px;top:431px;width:32px;height:6px;background:#eeeeee;filter:blur(1.5px)"></div>
<div style="left:424px;top:454px;width:32px;height:6px;background:#eeeeee;filter:blur(1.5px)"></div>
<div style="left:454.00px;top:353px;height:20px;line-height:20px;font-size:8.60px;color:#888;transform:scaleX(0.930);transform-origin:0 0;">I</div>
<div style="left:1172px;top:209px;width:11px;height:268px;background:#f1f1f1"></div>
<svg style="left:1175px;top:213px" width="5" height="4" viewBox="0 0 5 4"><path d="M0.5 3.5 L2.5 1 L4.5 3.5Z" fill="#999"/></svg>
<div style="left:1173px;top:220px;width:9px;height:257px;background:#c1c1c1"></div>
</body></html>
